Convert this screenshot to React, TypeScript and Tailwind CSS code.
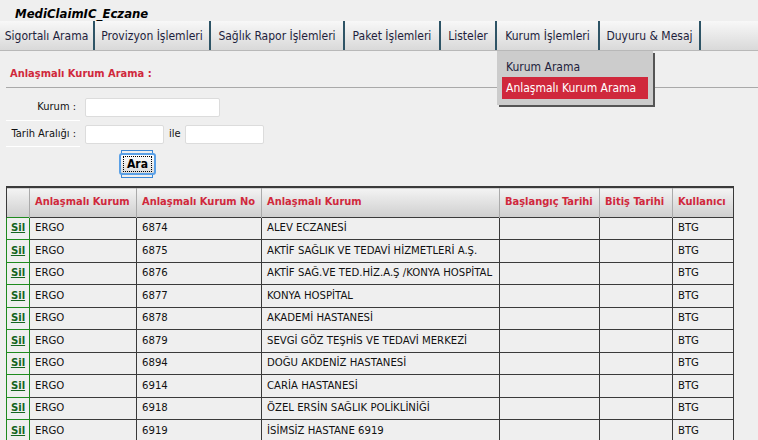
import React from "react";

const menuItems = [
    { label: "Sigortalı Arama", w: "w-[95px]" },
    { label: "Provizyon İşlemleri", w: "w-[116px]" },
    { label: "Sağlık Rapor İşlemleri", w: "w-[134px]" },
    { label: "Paket İşlemleri", w: "w-[96px]" },
    { label: "Listeler", w: "w-[56px]" },
    { label: "Kurum İşlemleri", w: "w-[103px]" },
    { label: "Duyuru & Mesaj", w: "w-[101px]" },
];

const rows = [
    ["6874", "ALEV ECZANESİ"],
    ["6875", "AKTİF SAĞLIK VE TEDAVİ HİZMETLERİ A.Ş."],
    ["6876", "AKTİF SAĞ.VE TED.HİZ.A.Ş /KONYA HOSPİTAL"],
    ["6877", "KONYA HOSPİTAL"],
    ["6878", "AKADEMİ HASTANESİ"],
    ["6879", "SEVGİ GÖZ TEŞHİS VE TEDAVİ MERKEZİ"],
    ["6894", "DOĞU AKDENİZ HASTANESİ"],
    ["6914", "CARİA HASTANESİ"],
    ["6918", "ÖZEL ERSİN SAĞLIK POLİKLİNİĞİ"],
    ["6919", "İSİMSİZ HASTANE 6919"],
];

const headers = [
    "Anlaşmalı Kurum",
    "Anlaşmalı Kurum No",
    "Anlaşmalı Kurum",
    "Başlangıç Tarihi",
    "Bitiş Tarihi",
    "Kullanıcı",
];

export default function App() {
    return (
        <div
            className="w-[758px] h-[440px] overflow-hidden bg-[#efefef] text-[11px] leading-[14px] text-[#111]"
            style={{ fontFamily: '"DejaVu Sans Condensed", "DejaVu Sans", sans-serif' }}
        >
            {/* Title */}
            <div className="h-[21px] pl-[15px] pt-[6px] text-[13px] font-bold italic leading-[15px] text-black">
                MediClaimIC_Eczane
            </div>

            {/* Menu bar */}
            <div className="relative flex h-[30px] border-b border-[#b8b8b8] bg-gradient-to-b from-[#f8f8f8] to-[#d9d9d9]">
                {menuItems.map((m) => (
                    <div
                        key={m.label}
                        className={`relative ${m.w} flex items-center justify-center border-r-2 border-r-[#2e5466] text-[12px] text-[#1e1e3c] shrink-0`}
                    >
                        {m.label}
                        {m.label === "Kurum İşlemleri" && (
                            <div className="absolute left-0 top-[30px] z-10 w-[156px] h-[54px] bg-[#cccccc] pt-[6px] px-[5px] shadow-[2px_2px_0_#555]">
                                <div className="h-[20px] leading-[20px] pl-[4px] text-[12px] text-[#1e1e3c]">Kurum Arama</div>
                                <div className="h-[22px] leading-[22px] pl-[4px] text-[12px] text-white bg-[#d0283c]">Anlaşmalı Kurum Arama</div>
                            </div>
                        )}
                    </div>
                ))}
            </div>

            {/* Section title */}
            <div className="ml-[6px] mt-[16px] pl-[4px] pb-[6px] border-b border-[#a9a9a9] font-bold text-[#d0283c]">
                Anlaşmalı Kurum Arama :
            </div>

            {/* Search form */}
            <div className="ml-[6px] mt-[8px]">
                <div className="flex items-start h-[25px]">
                    <div className="w-[74px] h-[25px] text-right pr-[4px] border-b border-white leading-[22px]">Kurum :</div>
                    <input className="ml-[5px] mt-[2px] w-[135px] h-[19px] bg-white border border-[#dcdcdc] rounded-[2px]" />
                </div>
                <div className="flex items-start h-[26px]">
                    <div className="w-[74px] h-[26px] text-right pr-[4px] border-b border-white leading-[26px]">Tarih Aralığı :</div>
                    <input className="ml-[5px] mt-[4px] w-[79px] h-[19px] bg-white border border-[#dcdcdc] rounded-[2px]" />
                    <span className="ml-[5px] leading-[26px]">ile</span>
                    <input className="ml-[4px] mt-[4px] w-[79px] h-[19px] bg-white border border-[#dcdcdc] rounded-[2px]" />
                </div>
                <div className="ml-[113px] mt-[4px] relative w-[37px] h-[26px]">
                    <div className="absolute left-[2px] -top-[1px] w-[32px] h-[28px] border border-[#3a86d4]" />
                    <button className="relative w-[37px] h-[22px] mt-[2px] rounded-[3px] border-2 border-[#5aa0e6] bg-gradient-to-b from-[#fdfdfd] to-[#dcdcdc] font-bold text-[12px] text-black">
                        <span className="block mx-[2px] border border-dotted border-black leading-[14px]">Ara</span>
                    </button>
                </div>
            </div>

            {/* Results table */}
            <table className="ml-[6px] mt-[9px] border-collapse table-fixed w-[727px]">
                <colgroup>
                    <col className="w-[23px]" />
                    <col className="w-[107px]" />
                    <col className="w-[125px]" />
                    <col className="w-[238px]" />
                    <col className="w-[100px]" />
                    <col className="w-[73px]" />
                    <col className="w-[61px]" />
                </colgroup>
                <thead>
                    <tr className="h-[30px] bg-gradient-to-b from-[#f3f3f3] to-[#cfcfcf] border-t-2 border-t-[#3a3a3a]">
                        <th className="border-x border-[#aaaaaa] border-l-[#3a3a3a]" />
                        {headers.map((h, i) => (
                            <th
                                key={i}
                                className={`border-x border-[#aaaaaa] text-left pl-[5px] font-bold text-[#d0283c] whitespace-nowrap ${i === headers.length - 1 ? "border-r-[#3a3a3a]" : ""}`}
                            >
                                {h}
                            </th>
                        ))}
                    </tr>
                </thead>
                <tbody className="text-[11.25px]">
                    {rows.map(([no, name]) => (
                        <tr key={no} className="h-[22.5px]">
                            <td className="border border-[#1e8a1e] text-center">
                                <span className="font-bold underline text-[#14641e]">Sil</span>
                            </td>
                            <td className="border border-[#3a3a3a] pl-[5px]">ERGO</td>
                            <td className="border border-[#3a3a3a] pl-[5px]">{no}</td>
                            <td className="border border-[#3a3a3a] pl-[5px] whitespace-nowrap">{name}</td>
                            <td className="border border-[#3a3a3a]" />
                            <td className="border border-[#3a3a3a]" />
                            <td className="border border-[#3a3a3a] pl-[5px]">BTG</td>
                        </tr>
                    ))}
                </tbody>
            </table>
        </div>
    );
}
